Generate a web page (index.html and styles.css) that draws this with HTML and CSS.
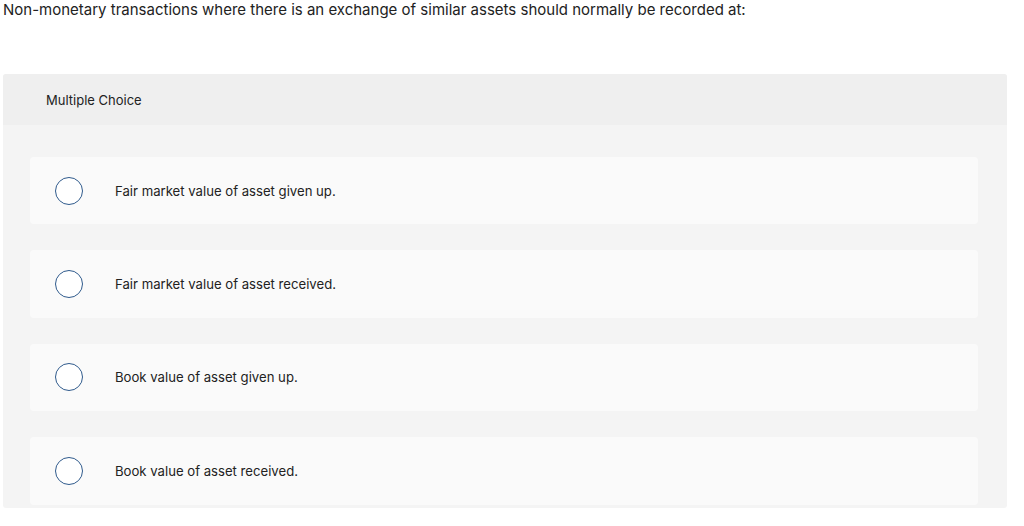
FILE: index.html
```html
<!DOCTYPE html>
<html>
<head>
<meta charset="utf-8">
<link rel="stylesheet" href="styles.css">
</head>
<body>
<p class="question">Non-monetary transactions where there is an exchange of similar assets should normally be recorded at:</p>
<div class="panel">
  <div class="panel-head">Multiple Choice</div>
  <div class="panel-body">
    <div class="option"><span class="radio"></span><span class="label">Fair market value of asset given up.</span></div>
    <div class="option"><span class="radio"></span><span class="label">Fair market value of asset received.</span></div>
    <div class="option"><span class="radio"></span><span class="label">Book value of asset given up.</span></div>
    <div class="option"><span class="radio"></span><span class="label">Book value of asset received.</span></div>
  </div>
</div>
</body>
</html>
```
FILE: styles.css
```css
html, body {
  margin: 0;
  padding: 0;
  background: #ffffff;
}
body {
  font-family: Inter, "Open Sans", sans-serif;
  color: #222;
}
.question {
  margin: 0;
  padding: 0 0 0 3px;
  font-size: 15px;
  line-height: 20px;
  height: 74px;
  color: #222;
}
.panel {
  margin: 0 17px 0 3px;
  border-radius: 3px;
  background: #f4f4f4;
  overflow: hidden;
  padding-bottom: 3px;
}
.panel-head {
  background: #efefef;
  height: 51px;
  display: flex;
  align-items: center;
  padding-left: 43px;
  font-size: 13px;
  color: #222;
}
.panel-body {
  padding: 32px 29px 0 27px;
  display: flex;
  flex-direction: column;
  gap: 26px;
}
.option {
  background: #fafafa;
  border-radius: 4px;
  height: 67.4px;
  display: flex;
  align-items: center;
}
.radio {
  width: 26px;
  height: 26px;
  border: 1px solid #2f5a8c;
  border-radius: 50%;
  background: #fff;
  margin-left: 25px;
  flex: none;
}
.label {
  margin-left: 32px;
  font-size: 13.15px;
  color: #222;
}
```
